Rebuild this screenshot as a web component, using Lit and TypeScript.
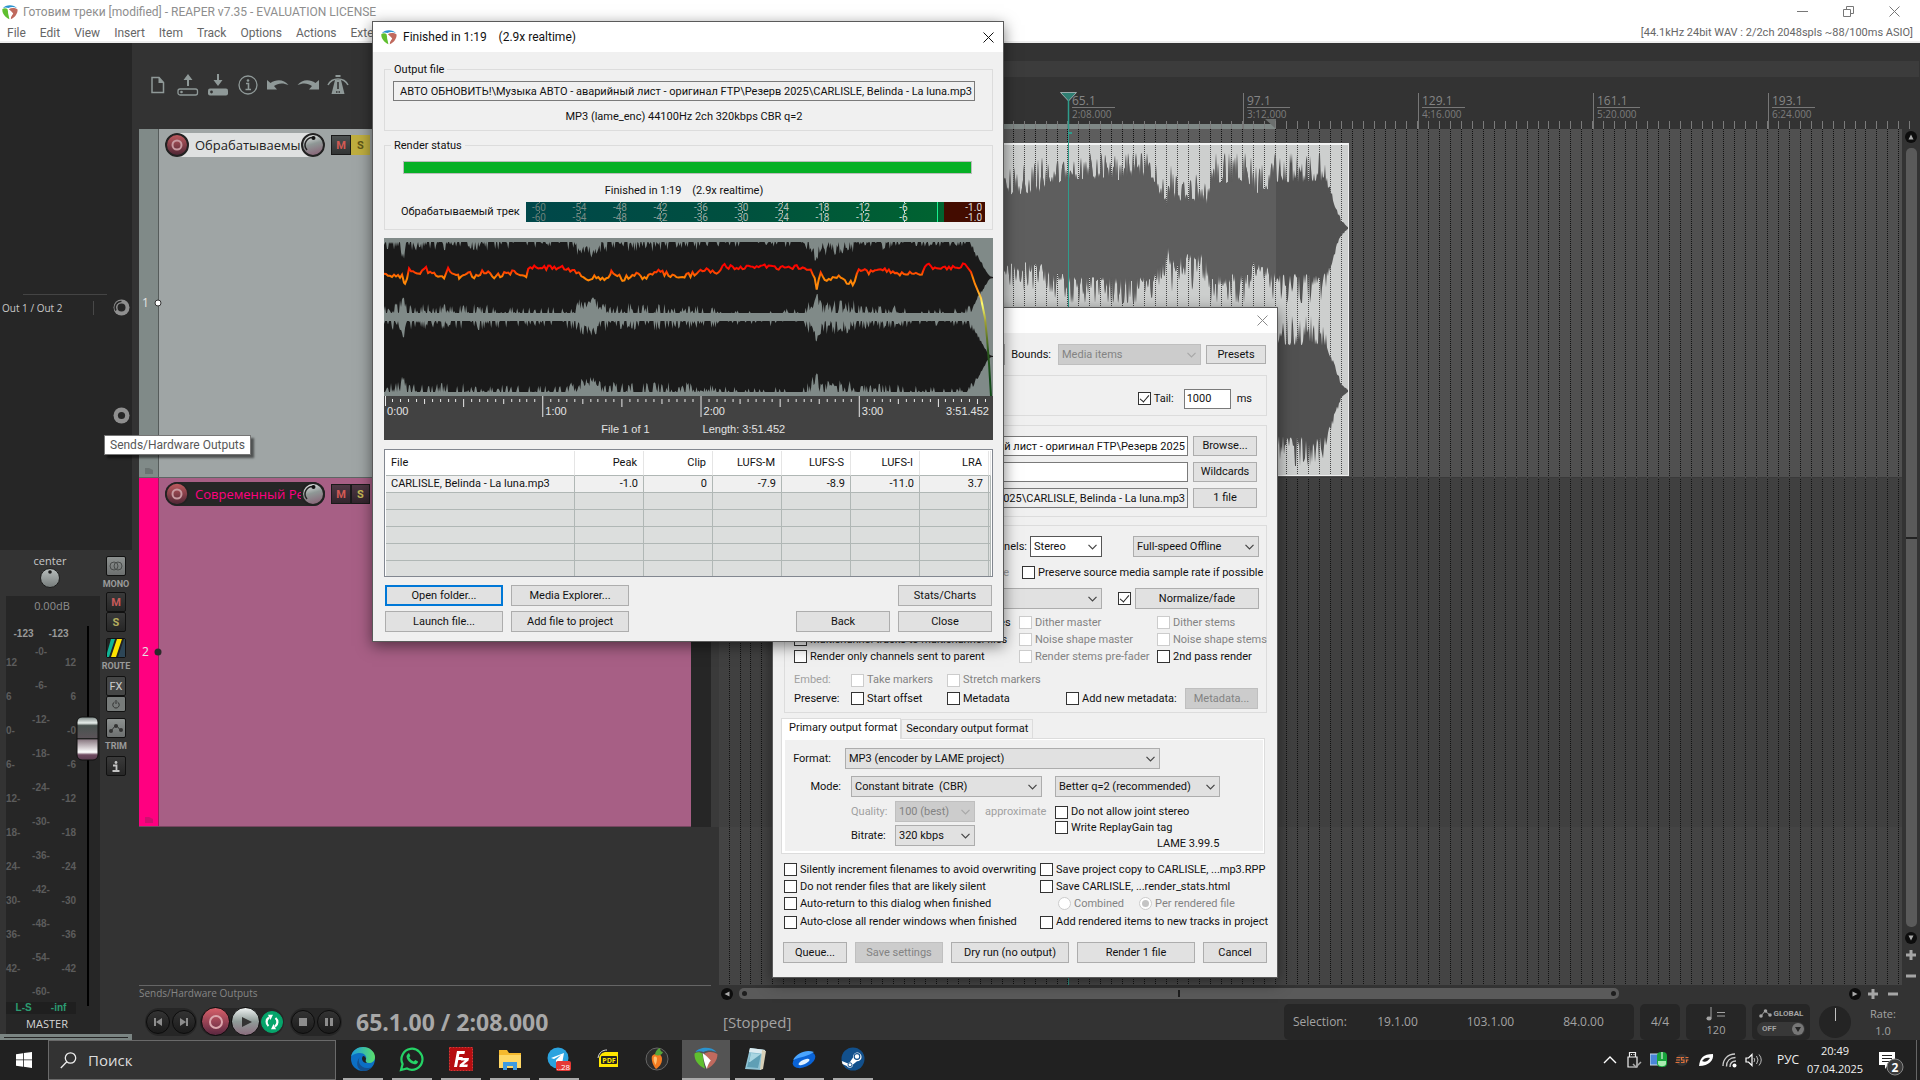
import { LitElement, html, svg, css } from "lit";
import { customElement } from "lit/decorators.js";

/* ---------- deterministic waveform helpers ---------- */
type Pt = [number, number, number]; // x, body level, peak level

function rng(seed: number) {
  let s = seed;
  return () => {
    s = (s * 1664525 + 1013904223) % 4294967296;
    return s / 4294967296;
  };
}

function levels(pts: Pt[], x: number): [number, number] {
  for (let i = 1; i < pts.length; i++) {
    if (x <= pts[i][0]) {
      const a = pts[i - 1];
      const b = pts[i];
      const t = (x - a[0]) / (b[0] - a[0] || 1);
      return [a[1] + (b[1] - a[1]) * t, a[2] + (b[2] - a[2]) * t];
    }
  }
  const l = pts[pts.length - 1];
  return [l[1], l[2]];
}

function wave(pts: Pt[], cy: number, half: number, seed: number, bias = 2): string {
  const r = rng(seed);
  const x0 = pts[0][0];
  const x1 = pts[pts.length - 1][0];
  const top: string[] = [];
  const bot: string[] = [];
  for (let x = x0; x <= x1; x++) {
    const [b, p] = levels(pts, x);
    const u = Math.min(1, b + (p - b) * Math.pow(r(), bias)) * half;
    const d = Math.min(1, b + (p - b) * Math.pow(r(), bias)) * half;
    top.push(`${x},${(cy - u).toFixed(1)}`);
    bot.unshift(`${x},${(cy + d).toFixed(1)}`);
  }
  return "M" + top.concat(bot).join("L") + "Z";
}

const ARRANGE: Pt[] = [
  [719, 0.55, 1], [990, 0.6, 0.95], [1003, 0.6, 0.8], [1010, 0.44, 0.8], [1040, 0.46, 0.95], [1050, 0.58, 1.05],
  [1068, 0.62, 1.05], [1072, 0.64, 1.08], [1146, 0.64, 1.08], [1156, 0.56, 0.85], [1162, 0.38, 0.75],
  [1168, 0.24, 0.65], [1170, 0.42, 0.9], [1180, 0.34, 0.75], [1192, 0.34, 0.85], [1203, 0.32, 0.7],
  [1207, 0.3, 0.75], [1211, 0.6, 1.05], [1248, 0.6, 1.05], [1254, 0.44, 0.85], [1270, 0.52, 0.95],
  [1276, 0.6, 1.02], [1318, 0.62, 1.08], [1325, 0.6, 0.85], [1330, 0.46, 0.6], [1336, 0.24, 0.32],
  [1341, 0.08, 0.12], [1348, 0.01, 0.02],
];

const RENDER: Pt[] = [
  [0, 0.76, 1.4], [14, 0.7, 1.2], [20, 0.5, 0.6], [23, 0.75, 1.35], [50, 0.72, 1.3], [60, 0.74, 1.2],
  [100, 0.74, 1.35], [140, 0.82, 1.5], [180, 0.82, 1.5], [195, 0.6, 0.95], [200, 0.58, 0.9],
  [212, 0.55, 0.85], [216, 0.7, 1.25], [300, 0.72, 1.3], [340, 0.84, 1.6], [415, 0.85, 1.6],
  [426, 0.62, 1.05], [432, 0.4, 0.7], [436, 0.62, 1.1], [468, 0.6, 1.05], [474, 0.75, 1.35],
  [500, 0.76, 1.4], [540, 0.84, 1.6], [582, 0.85, 1.2], [590, 0.62, 0.8], [597, 0.34, 0.42],
  [602, 0.12, 0.16], [605, 0.03, 0.04], [608, 0.01, 0.02],
];

function loudness(): string {
  const p = [
    [0, 37], [18, 39], [21, 46], [25, 32], [34, 36], [40, 29], [46, 36], [60, 38], [64, 32], [75, 39], [84, 34],
    [90, 40], [98, 33], [110, 38], [120, 36], [130, 33], [142, 39], [144, 29], [160, 30], [180, 29], [188, 32],
    [195, 35], [200, 42], [212, 38], [222, 42], [227, 34], [238, 41], [250, 36], [262, 41], [270, 32], [282, 36],
    [298, 39], [312, 35], [318, 32], [334, 35], [338, 28], [350, 30], [372, 28], [390, 30], [420, 28],
    [428, 34], [432, 50], [436, 36], [440, 42], [452, 38], [460, 43], [468, 46], [472, 36], [474, 31],
    [484, 34], [500, 32], [515, 36], [538, 34], [542, 28], [560, 30], [576, 29], [580, 26],
  ];
  const r = rng(77);
  const out: string[] = [];
  for (let i = 1; i < p.length; i++) {
    const [ax, ay] = p[i - 1];
    const [bx, by] = p[i];
    for (let x = ax; x < bx; x += 2) {
      out.push(`${x},${(ay + ((by - ay) * (x - ax)) / (bx - ax) + (r() - 0.5) * 5).toFixed(1)}`);
    }
  }
  return "M" + out.join("L") + "L580,26L586,34L590,46L596,60L600,80L602,100L604,125L606,158";
}

const BAR1 = 718.2;
const BAR = 5.4656;
const barX = (b: number) => BAR1 + (b - 1) * BAR;

/* ---------- small shared drawings ---------- */
const reaperLogo = (s: number) => html`<svg width=${s} height=${s} viewBox="0 0 16 16" aria-hidden="true">
  <path d="M1 4C3 .6 12-.2 15 4.2c-3-1.600-6-1.600-8.600-.2C4.400 3.200 2.600 3.400 1 4z" fill="#2b93cf"/>
  <path d="M.4 5c1.700-1.200 3.800-1 5.200.2.600 3.600 1 6.800 1.800 10C3 13.200-.2 9.200.4 5z" fill="#5fbf2f"/>
  <path d="M6.800 5.200c2.400-1.600 6-1.600 8.800.2.200 4-2.600 7.800-6.800 9.800-.4-2 .8-3.800 2-5.400z" fill="#c06a5e"/>
  <path d="M5.800 4.600c2 1.500 3.700 3 5.400 5-1.200 1.600-2.400 3.400-2.600 5.800C7 12 6.200 8.400 5.800 4.600z" fill="#fff"/>
</svg>`;

const closeX = (c: string) => html`<svg width="11" height="11" viewBox="0 0 11 11" aria-hidden="true"><path d="M.5.5l10 10M10.500.5l-10 10" stroke=${c} fill="none"/></svg>`;

const check = (label: string, o: { on?: boolean; off?: boolean } = {}) => html`<label class="chk ${o.off ? "off" : ""}"><input type="checkbox" ?checked=${!!o.on} ?disabled=${!!o.off} />${label}</label>`;

const pick = (name: string, value: string, cls: string, off = false) => html`<span class="pick ${cls} ${off ? "off" : ""}">
  <select aria-label=${name} ?disabled=${off}><option>${value}</option></select>
  <svg width="9" height="6" viewBox="0 0 9 6" aria-hidden="true"><path d="M.5.8l4 4 4-4" fill="none" stroke="currentColor" stroke-width="1.200"/></svg>
</span>`;

const knobRing = (arc: boolean) => html`<svg width="17" height="17" viewBox="0 0 17 17" aria-hidden="true">
  <circle cx="8.500" cy="8.500" r="8" fill="#8f8f8f"/><circle cx="8.500" cy="8.500" r="3.600" fill="#262626"/>
  ${arc ? svg`<path d="M3 11.500A6 6 0 0 1 8.500 2.500" fill="none" stroke="#262626" stroke-width="1.500"/><circle cx="8.500" cy="8.500" r="5" fill="#8f8f8f"/><circle cx="8.500" cy="8.500" r="4" fill="#262626"/>` : ""}
</svg>`;

const sharedStyles = css`
  * { box-sizing: border-box; }
  svg { display: block; flex: none; }
  button, input, select { font: inherit; color: inherit; margin: 0; }
`;

/* ---------- dialogs ---------- */
const dialogStyles = css`
  :host {
    display: block; background: #f0f0f0; border: 1px solid #5a5a5a; color: #111;
    font: 11px/14px Roboto, "Liberation Sans", Arial, sans-serif; box-shadow: 0 4px 14px rgba(0, 0, 0, 0.5);
  }
  .bar { display: flex; align-items: center; background: #fff; font-size: 12px; gap: 6px; }
  .bar h2 { font: inherit; margin: 0; flex: 1; white-space: pre; }
  .x { border: 0; background: none; padding: 0 9px; height: 100%; }
  .btn { background: #e1e1e1; border: 1px solid #adadad; padding: 0; height: 21px; text-align: center; white-space: nowrap; }
  .btn.focus { border: 2px solid #0078d7; }
  .btn:disabled { background: #ccc; border-color: #bfbfbf; color: #838383; }
  .field { height: 20px; border: 1px solid #7a7a7a; background: #fff; padding: 0 2px; min-width: 0; }
  .field.ro { background: #f0f0f0; }
  .right { text-align: right; }
  .chk { display: flex; align-items: center; gap: 3px; white-space: nowrap; }
  .chk input { appearance: none; width: 13px; height: 13px; border: 1px solid #333; background: #fff; display: grid; place-items: center; flex: none; }
  .chk input:checked::after { content: ""; width: 4px; height: 8px; border: solid #222; border-width: 0 1px 1px 0; transform: rotate(40deg); margin-top: -2px; }
  .chk input[type="radio"] { border-radius: 50%; }
  .chk input[type="radio"]:checked::after { width: 7px; height: 7px; margin: 0; border: 0; border-radius: 50%; background: #c4c4c4; transform: none; }
  .off, .dim { color: #838383; }
  .dim { color: #a0a0a0; }
  .chk.off input { border-color: #ccc; }
  .pick { display: grid; grid-template-columns: 1fr 20px; align-items: center; height: 21px; }
  .pick select { grid-area: 1 / 1 / 2 / 3; appearance: none; width: 100%; height: 21px; border: 1px solid #adadad; border-radius: 0; background: #e1e1e1; padding: 0 3px; opacity: 1; white-space: pre; }
  .pick svg { grid-area: 1 / 2; justify-self: center; color: #444; pointer-events: none; }
  .pick.off select { background: #ccc; border-color: #bfbfbf; color: #838383; }
  .pick.off svg { color: #a8a8a8; }
  .pick.white select { background: #fff; border-color: #555; }
`;

@customElement("finished-dialog")
export class FinishedDialog extends LitElement {
  static styles = [sharedStyles, dialogStyles, css`
    .bar { height: 30px; padding-left: 8px; }
    .body { padding: 11px 10px 9px 11px; display: grid; gap: 8px; }
    fieldset { margin: 0; padding: 0; border: 1px solid #dcdcdc; min-width: 0; }
    legend { margin-left: 6px; padding: 0 3px; height: 13px; line-height: 14px; }
    .out { display: grid; justify-items: center; padding: 5px 17px 6px 8px; gap: 9px; }
    .out .field { width: 100%; }
    .status { padding: 9px 7px 7px 16px; display: grid; }
    .prog { height: 13px; border: 1px solid #bcbcbc; background: #06b025; margin: 0 13px 0 2px; }
    .msg { text-align: center; margin: 10px 0 4px; padding-right: 18px; white-space: pre; }
    .meter { display: flex; align-items: center; justify-content: space-between; }
    .meter svg { width: 459px; }
    .graph svg { width: 100%; }
    .grid { border: 1px solid #828790; background: #fff; padding: 1px; height: 128px; overflow: hidden; margin-top: 1px; }
    table { border-collapse: separate; border-spacing: 0; table-layout: fixed; width: 100%; }
    th, td { padding: 0 5px; font-weight: normal; text-align: right; border: solid #b0b7b5; border-width: 0 1px 1px 0; height: 17px; line-height: 16px; white-space: nowrap; }
    th { height: 25px; background: #fff; border-right-color: #e5e5e5; padding-right: 6px; }
    th:first-child, td:first-child { text-align: left; }
    td { background: #dcdedd; }
    .data td { background: #f0f0f0; }
    .c0 { width: 189px; } .c1 { width: 69px; }
    .acts { display: grid; grid-template-columns: 118px 118px 1fr 94px 94px; gap: 5px 8px; padding: 0 1px; }
    .last { grid-column: 5; } .back { grid-column: 4; }
  `];

  private meter() {
    const marks = [-60, -54, -48, -42, -36, -30, -24, -18, -12, -6];
    return html`<svg height="20" viewBox="0 0 459 20" preserveAspectRatio="none" role="img" aria-label="Output meter">
      <defs><linearGradient id="mg"><stop offset="0" stop-color="#00474a"/><stop offset=".5" stop-color="#00503f"/><stop offset="1" stop-color="#006430"/></linearGradient></defs>
      <rect width="418" height="20" fill="url(#mg)"/><rect x="418" width="41" height="20" fill="#430c00"/>
      <rect x="411" width="1" height="20" fill="#19ef8e"/>
      ${marks.map((m, i) => {
        const x = 13 + i * 40.5;
        const f = `rgb(${105 + i * 13},${128 + i * 11},${122 + i * 11})`;
        return svg`<path d="M${Math.round(x) + 0.5} 0v1M${Math.round(x) + 0.5} 9v2M${Math.round(x) + 0.5} 19v1" stroke=${f}/><g fill=${f} font-size="10" text-anchor="middle"><text x=${x} y="9">${m}</text><text x=${x} y="19">${m}</text></g>`;
      })}
      <g fill="#ddd" font-size="10" text-anchor="end"><text x="456" y="9">-1.0</text><text x="456" y="19">-1.0</text></g>
    </svg>`;
  }

  private ticks() {
    const out = [];
    for (let s = 0; s <= 231; s += 3) {
      const x = Math.floor(1 + s * 2.629) + 0.5;
      const h = s % 60 === 0 ? (s ? 21 : 10) : s % 30 === 0 ? 11 : s % 15 === 0 ? 8 : 6;
      out.push(svg`<path d="M${x} ${s % 60 === 0 ? 0 : 3}V${h}" stroke="#e8e8e8"/>`);
    }
    return out;
  }

  render() {
    return html`
      <div class="bar">${reaperLogo(16)}<h2>Finished in 1:19    (2.9x realtime)</h2><button class="x" aria-label="Close window">${closeX("#111")}</button></div>
      <div class="body">
        <fieldset><legend>Output file</legend>
          <div class="out"><input class="field ro right" aria-label="Output file" readonly value="АВТО ОБНОВИТЬ!\\Музыка АВТО - аварийный лист - оригинал FTP\\Резерв 2025\\CARLISLE, Belinda - La luna.mp3" />
          <span>MP3 (lame_enc) 44100Hz 2ch 320kbps CBR q=2</span></div>
        </fieldset>
        <fieldset><legend>Render status</legend>
          <div class="status"><div class="prog" role="progressbar" aria-valuenow="100"></div>
            <div class="msg">Finished in 1:19    (2.9x realtime)</div>
            <div class="meter"><span>Обрабатываемый трек</span>${this.meter()}</div></div>
        </fieldset>
        <div class="graph">
          <svg height="158" viewBox="0 0 608 158" preserveAspectRatio="none" role="img" aria-label="Rendered waveform">
            <defs><linearGradient id="lg" gradientUnits="userSpaceOnUse" x1="0" y1="28" x2="0" y2="140">
              <stop offset="0" stop-color="#f00"/><stop offset=".03" stop-color="#ff1a00"/><stop offset=".1" stop-color="#ff8200"/><stop offset=".2" stop-color="#ff8c10"/><stop offset=".34" stop-color="#ffff70"/><stop offset=".5" stop-color="#a0a030"/><stop offset=".75" stop-color="#2c5a1c"/><stop offset="1" stop-color="#124a18"/></linearGradient></defs>
            <rect width="608" height="158" fill="#808a88"/>
            <path d=${wave(RENDER, 39.5, 35.5, 11, 1)} fill="#1a1a1a"/><path d=${wave(RENDER, 118.5, 35.5, 29, 1)} fill="#1a1a1a"/>
            <path d=${loudness()} fill="none" stroke="url(#lg)" stroke-width="2"/>
          </svg>
          <svg height="44" viewBox="0 0 608 44" preserveAspectRatio="none"><rect width="608" height="44" fill="#424242"/>${this.ticks()}
            <g fill="#e2e2e2" font-size="11" font-family="Liberation Sans"><text x="3" y="19">0:00</text><text x="161" y="19">1:00</text><text x="319" y="19">2:00</text><text x="477" y="19">3:00</text><text x="604" y="19" text-anchor="end">3:51.452</text>
            <text x="217" y="37">File 1 of 1</text><text x="318" y="37">Length: 3:51.452</text></g></svg>
        </div>
        <div class="grid"><table>
          <colgroup><col class="c0" />${[1, 2, 3, 4, 5, 6].map(() => html`<col class="c1" />`)}<col /></colgroup>
          <thead><tr>${["File", "Peak", "Clip", "LUFS-M", "LUFS-S", "LUFS-I", "LRA", ""].map((t) => html`<th>${t}</th>`)}</tr></thead>
          <tbody><tr class="data">${["CARLISLE, Belinda - La luna.mp3", "-1.0", "0", "-7.9", "-8.9", "-11.0", "3.7", ""].map((t) => html`<td>${t}</td>`)}</tr>
          ${[1, 2, 3, 4, 5].map(() => html`<tr>${[1, 2, 3, 4, 5, 6, 7, 8].map(() => html`<td></td>`)}</tr>`)}</tbody>
        </table></div>
        <div class="acts">
          <button class="btn focus">Open folder...</button><button class="btn">Media Explorer...</button><button class="btn last">Stats/Charts</button>
          <button class="btn">Launch file...</button><button class="btn">Add file to project</button><button class="btn back">Back</button><button class="btn last">Close</button>
        </div>
      </div>`;
  }
}

@customElement("render-dialog")
export class RenderDialog extends LitElement {
  static styles = [sharedStyles, dialogStyles, css`
    .bar { height: 25px; justify-content: flex-end; }
    .body { padding: 11px 10px 14px 11px; }
    .row { display: flex; align-items: center; }
    .end { justify-content: flex-end; }
    .box { border: 1px solid #dcdcdc; }
    .top { gap: 5px; padding-right: 1px; }
    .top .btn { width: 60px; height: 19px; }
    .b143 { width: 143px; } .b72 { width: 72px; } .b126 { width: 126px; } .b315 { width: 315px; } .b191 { width: 191px; } .b165 { width: 165px; } .b80 { width: 80px; }
    .src { width: 200px; }
    .bounds { margin: 0 2px 0 1px; }
    .tail { height: 41px; margin-top: 10px; padding: 6px 14px 0 0; }
    .tail .field { width: 47px; margin: 0 6px 0 10px; }
    .files { margin-top: 9px; padding: 10px 9px 8px; display: grid; grid-template-columns: 1fr 64px; gap: 6px 5px; }
    .files .btn { height: 20px; }
    .opts { margin-top: 8px; padding: 10px 7px 3px 9px; }
    .opts .r1 { gap: 3px; } .opts .b126 { margin-left: 28px; }
    .r2 { display: grid; grid-template-columns: 215px 1fr; column-gap: 13px; height: 31px; }
    .r3 .chk { margin: 0 4px 0 16px; } .r3 .btn { width: 124px; } .r3 .b { width: 260px; }
    .marks { display: grid; grid-template-columns: 225px 138px 1fr; grid-auto-rows: 17px; margin-top: 5px; }
    .embed { display: grid; grid-template-columns: 57px 96px 119px 119px 73px; align-items: center; margin-top: 8px; row-gap: 1px; }
    .tabs { display: flex; align-items: flex-end; margin: 5px 2px 0 -3px; }
    .tab { border: 1px solid #dcdcdc; border-bottom: 0; background: #f0f0f0; height: 19px; padding: 0 4px; white-space: nowrap; }
    .tab.on { background: #fff; height: 21px; padding: 0 3px 2px 7px; margin-bottom: -1px; z-index: 1; }
    .panel { border: 1px solid #dcdcdc; background: #fff; padding: 1px 1px 2px 3px; margin: 0 2px 0 -3px; }
    .inner { background: #f0f0f0; padding: 8px 0 0; height: 111px; }
    .lab { text-align: right; }
    .f1 { display: grid; grid-template-columns: 46px 1fr; column-gap: 14px; }
    .f2 { display: grid; grid-template-columns: 56px 191px 165px; column-gap: 10px; margin-top: 7px; }
    .f2 .b165 { margin-left: 3px; width: 165px; }
    .f3 { display: grid; grid-template-columns: 34px 80px 70px 1fr; grid-template-rows: 21px 21px; gap: 3px 10px; align-items: center; margin: 4px 0 0 66px; }
    .f3 > .col { grid-area: 1 / 4 / 3 / 5; align-self: start; display: grid; grid-template-rows: 16px 15px 18px; height: 45px; align-items: center; margin: 3px 0 0 -10px; }
    .lame { padding-left: 102px; }
    .more { display: grid; grid-template-columns: 256px 1fr; grid-template-rows: 17px 17px 17px 20px; align-items: center; margin-top: 7px; }
    .rad { display: flex; gap: 15px; padding-left: 18px; }
    .foot { display: grid; grid-template-columns: 64px 88px 118px 118px 64px; justify-content: space-between; margin: 10px 0 0 -1px; }
  `];
  render() {
    return html`
      <div class="bar"><button class="x" aria-label="Close window">${closeX("#8a8a8a")}</button></div>
      <div class="body">
        <div class="row end top">${pick("Source", "", "src")}<span class="bounds">Bounds:</span>${pick("Bounds", "Media items", "b143", true)}<button class="btn">Presets</button></div>
        <div class="row end box tail">${check("Tail:", { on: true })}<input class="field" aria-label="Tail length" value="1000" />ms</div>
        <div class="box files">
          <input class="field right" aria-label="Directory" value="аварийный лист - оригинал FTP\\Резерв 2025" /><button class="btn">Browse...</button>
          <input class="field" aria-label="File name" /><button class="btn">Wildcards</button>
          <input class="field ro right" aria-label="Render to" readonly value="2025\\CARLISLE, Belinda - La luna.mp3" /><button class="btn">1 file</button>
        </div>
        <div class="box opts">
          <div class="row end r1"><span>Channels:</span>${pick("Channels", "Stereo", "b72 white")}${pick("Render speed", "Full-speed Offline", "b126")}</div>
          <div class="row r2"><span class="dim lab">sample rate</span>${check("Preserve source media sample rate if possible")}</div>
          <div class="row end r3">${pick("Resample mode", "", "b")}${check("", { on: true })}<button class="btn">Normalize/fade</button></div>
          <div class="marks">
            ${check("Tracks with all mono media to mono files")}${check("Dither master", { off: true })}${check("Dither stems", { off: true })}
            ${check("Multichannel tracks to multichannel files")}${check("Noise shape master", { off: true })}${check("Noise shape stems", { off: true })}
            ${check("Render only channels sent to parent")}${check("Render stems pre-fader", { off: true })}${check("2nd pass render")}
          </div>
          <div class="embed"><span class="dim">Embed:</span>${check("Take markers", { off: true })}${check("Stretch markers", { off: true })}<i></i><i></i>
            <span>Preserve:</span>${check("Start offset")}${check("Metadata")}${check("Add new metadata:")}<button class="btn" disabled>Metadata...</button></div>
        </div>
        <div class="tabs" role="tablist"><button class="tab on" role="tab">Primary output format</button><button class="tab" role="tab">Secondary output format</button></div>
        <div class="panel"><div class="inner">
          <div class="row f1"><span class="lab">Format:</span>${pick("Format", "MP3 (encoder by LAME project)", "b315")}</div>
          <div class="row f2"><span class="lab">Mode:</span>${pick("Mode", "Constant bitrate \u00a0(CBR)", "b191")}${pick("Encoder quality", "Better q=2 (recommended)", "b165")}</div>
          <div class="f3"><span class="dim">Quality:</span>${pick("Quality", "100 (best)", "b80", true)}<span class="dim">approximate</span>
            <div class="col">${check("Do not allow joint stereo")}${check("Write ReplayGain tag")}<span class="lame">LAME 3.99.5</span></div>
            <span>Bitrate:</span>${pick("Bitrate", "320 kbps", "b80")}</div>
        </div></div>
        <div class="more">
          ${check("Silently increment filenames to avoid overwriting")}${check("Save project copy to CARLISLE, ...mp3.RPP")}
          ${check("Do not render files that are likely silent")}${check("Save CARLISLE, ...render_stats.html")}
          ${check("Auto-return to this dialog when finished")}
          <div class="rad"><label class="chk off"><input type="radio" name="st" disabled />Combined</label><label class="chk off"><input type="radio" name="st" disabled checked />Per rendered file</label></div>
          ${check("Auto-close all render windows when finished")}${check("Add rendered items to new tracks in project")}
        </div>
        <div class="foot"><button class="btn">Queue...</button><button class="btn" disabled>Save settings</button><button class="btn">Dry run (no output)</button><button class="btn">Render 1 file</button><button class="btn">Cancel</button></div>
      </div>`;
  }
}

/* ---------- master strip ---------- */
@customElement("master-strip")
export class MasterStrip extends LitElement {
  static styles = [sharedStyles, css`
    :host { display: flex; flex-direction: column; width: 132px; flex: none; background: #333; color: #c8c8c8; font: 11px/14px "Open Sans", "Noto Sans", sans-serif; }
    .sends { background: #262626; height: 507px; padding-top: 251px; flex: none; }
    .rule { height: 1px; background: #444; margin: 0 25px 0 23px; }
    .out { display: flex; align-items: center; padding: 4px 2px 0; justify-content: space-between; }
    .out span { font-size: 10px; width: 92px; border-right: 1px solid #484848; white-space: nowrap; }
    .ring { display: flex; justify-content: flex-end; padding: 91px 2px 0 0; }
    .strip { display: flex; flex: 1; padding-left: 6px; min-height: 0; }
    .left { width: 94px; display: flex; flex-direction: column; align-items: center; }
    .pan { height: 46px; display: flex; flex-direction: column; align-items: center; padding: 4px 6px 0 0; }
    .fader { background: #262626; width: 94px; flex: 1; display: flex; flex-direction: column; min-height: 0; }
    .db { text-align: center; color: #8f8f8f; padding: 3px 2px 0 0; height: 30px; }
    .body { display: flex; flex: 1; min-height: 0; }
    .meters { width: 70px; font: bold 10px/34px "Liberation Sans", sans-serif; color: #5c5c5c; }
    .pk { display: flex; justify-content: space-around; color: #999; line-height: 16px; height: 9px; }
    .scale { display: flex; justify-content: space-between; height: 367px; }
    .scale div { display: flex; flex-direction: column; }
    .side { padding-top: 11px; } .r { text-align: right; } .c { text-align: center; }
    .slot { width: 24px; display: flex; justify-content: center; }
    .ls { display: flex; justify-content: space-around; width: 70px; background: #1f1f1f; color: #2c9c72; font: bold 10px/12px "Liberation Sans", sans-serif; height: 12px; }
    .name { width: 84px; text-align: center; height: 20px; line-height: 20px; padding-right: 2px; color: #d5d5d5; }
    .btns { width: 32px; display: flex; flex-direction: column; align-items: center; padding: 6px 0 0; }
    .btns button { width: 20px; height: 20px; padding: 0; display: grid; place-items: center; border: 1px solid #111; border-radius: 2px; background: linear-gradient(#3a3a3a, #262626); font: bold 11px/1 Roboto, sans-serif; flex: none; }
    .btns .lt { background: linear-gradient(#8d9190, #6d7070); }
    .btns .m { color: #c75a5a; } .btns .s { color: #b5ad5e; }
    .btns .fx { font-weight: normal; color: #ccc; background: #454646; } .btns .pw { height: 16px; background: #777b7a; margin-bottom: 6px; }
    .btns small { font: bold 9px/16px Roboto, sans-serif; color: #9a9a9a; height: 16px; }
    .btns .s { margin-bottom: 6px; } .btns .rt + small { height: 18px; } .btns .tr + small { height: 18px; }
    .foot { height: 6px; background: #7b8583; padding: 3px 4px 0; } .foot div { height: 1px; background: #262626; }
  `];
  render() {
    const mid = [0, 6, 12, 18, 24, 30, 36, 42, 48, 54, 60];
    const side = ["12", "6", "0-", "6-", "12-", "18-", "24-", "30-", "36-", "42-"];
    const sideR = ["12", "6", "-0", "-6", "-12", "-18", "-24", "-30", "-36", "-42"];
    return html`
      <div class="sends"><div class="rule"></div><div class="out"><span>Out 1 / Out 2</span>${knobRing(true)}</div><div class="ring">${knobRing(false)}</div></div>
      <div class="strip">
        <div class="left">
          <div class="pan"><span>center</span><svg width="20" height="20" viewBox="0 0 20 20"><defs><linearGradient id="kg" x2="0" y2="1"><stop stop-color="#b9bfbe"/><stop offset="1" stop-color="#757b7a"/></linearGradient></defs><circle cx="10" cy="10" r="9.500" fill="url(#kg)" stroke="#1c1c1c"/><circle cx="10" cy="4" r="1.800" fill="#1c1c1c"/></svg></div>
          <div class="fader"><div class="db">0.00dB</div>
            <div class="body"><div class="meters"><div class="pk"><span>-123</span><span>-123</span></div>
              <div class="scale"><div class="side">${side.map((s) => html`<span>${s}</span>`)}</div><div class="c">${mid.map((m) => html`<span>-${m}-</span>`)}</div><div class="side r">${sideR.map((s) => html`<span>${s}</span>`)}</div></div>
              <div class="ls"><span>L-S</span><span>-inf</span></div></div>
              <div class="slot"><svg width="24" height="380" viewBox="0 0 24 380"><defs><linearGradient id="fk" x2="0" y2="1"><stop stop-color="#7c8785"/><stop offset=".14" stop-color="#e8efec"/><stop offset=".2" stop-color="#48524f"/><stop offset=".48" stop-color="#5a5358"/><stop offset=".5" stop-color="#222"/><stop offset=".54" stop-color="#8f7f88"/><stop offset=".82" stop-color="#fff"/><stop offset=".88" stop-color="#6e4a60"/><stop offset="1" stop-color="#5a3d50"/></linearGradient></defs>
                <rect x="11" y="0" width="2" height="380"/><rect x="1" y="91" width="21" height="43" rx="5" fill="url(#fk)" stroke="#111"/></svg></div></div>
            <div class="name">MASTER</div></div>
        </div>
        <div class="btns">
          <button class="lt" aria-label="Mono"><svg width="14" height="10" viewBox="0 0 14 10"><g fill="none" stroke="#484b4a"><circle cx="5" cy="5" r="4"/><circle cx="9" cy="5" r="4"/></g></svg></button><small>MONO</small>
          <button class="m">M</button><button class="s">S</button>
          <button class="rt" aria-label="Route"><svg width="18" height="18" viewBox="0 0 18 18"><rect width="18" height="18" fill="#222"/><path d="M0 14L4 0h4L2 18H0z" fill="#10b597"/><path d="M4 18L10 0h5L9 18z" fill="#ffe200"/><path d="M11 18l6-18h1v18z" fill="#2d4657"/></svg></button><small>ROUTE</small>
          <button class="fx">FX</button><button class="pw" aria-label="Bypass"><svg width="8" height="9" viewBox="0 0 8 9"><path d="M2.500 2a3.200 3.200 0 1 0 3 0M4 0v4" fill="none" stroke="#333"/></svg></button>
          <button class="lt tr" aria-label="Trim"><svg width="14" height="9" viewBox="0 0 14 9"><path d="M2 7l4-5 2 0 4 5" fill="none" stroke="#333"/><circle cx="2" cy="7" r="2" fill="#333"/><circle cx="7" cy="2" r="2" fill="#333"/><circle cx="12" cy="6" r="2" fill="#333"/></svg></button><small>TRIM</small>
          <button aria-label="Info"><svg width="8" height="11" viewBox="0 0 8 11"><path d="M1 4.500h3.500V10M.5 10h7" fill="none" stroke="#c4c4c4" stroke-width="1.800"/><circle cx="4" cy="1.500" r="1.400" fill="#c4c4c4"/></svg></button>
        </div>
      </div>
      <div class="foot"><div></div></div>`;
  }
}

/* ---------- track panel ---------- */
@customElement("track-panel")
export class TrackPanel extends LitElement {
  static styles = [sharedStyles, css`
    :host { display: flex; flex-direction: column; width: 587px; flex: none; background: #333; padding-left: 7px; font: 14px/20px "Open Sans", "Noto Sans", sans-serif; min-height: 0; }
    .tools { height: 86px; flex: none; display: flex; gap: 2px; padding: 28px 0 0 5px; }
    .tools button { border: 0; background: none; padding: 0; width: 28px; height: 28px; display: grid; place-items: center; }
    .track { display: flex; height: 349px; width: 552px; flex: none; border-bottom: 1px solid #5e6664; }
    .tracks { background: linear-gradient(90deg, #333 552px, #262626 552px, #262626 572px, #3a3a3a 572px); }
    .idx { width: 20px; display: grid; grid-template-rows: 1fr 20px 1fr; justify-items: end; border-right: 1px solid #565c5b; background: #808a88; color: #e4e4e4; font-size: 12px; }
    .idx div { grid-row: 2; display: grid; grid-template-columns: 12px 8px; align-items: center; margin-right: -4px; }
    .idx .fold { grid-row: 3; align-self: end; justify-self: center; margin-bottom: 3px; }
    .idx svg { z-index: 1; }
    .one { background: #9fa5a5; } .two { background: #a75f85; border-bottom-color: #76465f; }
    .two .idx { background: #ff0080; border-right-color: #a0195d; }
    .main { flex: 1; padding: 4px 0 0 6px; display: flex; align-items: flex-start; gap: 6px; }
    .pill { display: flex; align-items: center; width: 160px; height: 24px; border-radius: 12px; background: #dfe1e1; color: #222; }
    .pill span { width: 106px; margin-left: auto; overflow: hidden; white-space: nowrap; font-size: 13px; }
    .two .pill { background: #262626; color: #ff0080; }
    .ms { display: flex; padding-top: 2px; }
    .ms button { width: 20px; height: 20px; padding: 0; border: 1px solid #1a1a1a; font: bold 11px/1 Roboto, sans-serif; background: linear-gradient(#4c5050, #323434); color: #d25a54; }
    .ms .s { color: #c4b955; width: 19px; } .ms .s.lit { background: #bfae3f; border-color: #bfae3f; color: #5e5517; }
    .two .ms button { background: linear-gradient(#4e3844, #33252d); }
    .fill { flex: 1; }
    .note { border-top: 1px solid #666; height: 55px; width: 572px; flex: none; color: #868686; font-size: 10px; line-height: 15px; }
  `];
  private rec(d: boolean) {
    return html`<svg width="24" height="24" viewBox="0 0 24 24"><defs><linearGradient id="rg" x2="0" y2="1"><stop stop-color="#c25c60"/><stop offset="1" stop-color="#4a2433"/></linearGradient></defs><circle cx="12" cy="12" r="11" fill="url(#rg)" stroke="#222" stroke-width=${d ? 2 : 1.6}/><circle cx="12" cy="12" r="4.500" fill="none" stroke="#c79aa0" stroke-width="2"/></svg>`;
  }
  private vol() {
    return html`<svg width="24" height="24" viewBox="0 0 24 24"><defs><linearGradient id="vg" x2=".3" y2="1"><stop stop-color="#fff"/><stop offset=".55" stop-color="#8f9896"/><stop offset="1" stop-color="#8a6b7c"/></linearGradient></defs><circle cx="12" cy="12" r="11" fill="url(#vg)" stroke="#222" stroke-width="2"/><path d="M6 17A7.500 7.500 0 0 1 12 4.500" fill="none" stroke="#222" stroke-width="1.500"/><circle cx="12.500" cy="5" r="2" fill="#111"/></svg>`;
  }
  private fold(c: string) {
    return html`<svg class="fold" width="8" height="6" viewBox="0 0 8 6"><path d="M0 0h4l4 2v4H0z" fill=${c}/></svg>`;
  }
  render() {
    const c = "#8f9998";
    return html`
      <div class="tools">
        <button aria-label="New project"><svg width="14" height="18" viewBox="0 0 14 18"><path d="M1 1.500h7l4.500 5v10H1z" fill="none" stroke=${c} stroke-width="1.500"/><path d="M7.500 1v6H13z" fill=${c}/></svg></button>
        <button aria-label="Open project"><svg width="22" height="22" viewBox="0 0 22 22"><path d="M10 12V6H6.500L11 0l4.500 6H12v6z" fill=${c}/><rect x="1" y="15" width="19.500" height="6" rx="2" fill="none" stroke=${c} stroke-width="1.300"/><circle cx="4.500" cy="18" r="1.300" fill=${c}/></svg></button>
        <button aria-label="Save project"><svg width="22" height="22" viewBox="0 0 22 22"><path d="M10 0v6H6.500L11 12l4.500-6H12V0z" fill=${c}/><rect x="1" y="14.500" width="20" height="7" rx="2" fill=${c}/><circle cx="4.500" cy="18" r="1.400" fill="#333"/></svg></button>
        <button aria-label="Project settings"><svg width="20" height="20" viewBox="0 0 20 20"><circle cx="10" cy="10" r="9" fill="none" stroke=${c} stroke-width="1.300"/><path d="M8 8.500h2.500V14M7.500 14.500h5.500" fill="none" stroke=${c} stroke-width="1.600"/><circle cx="10" cy="5.500" r="1.300" fill=${c}/></svg></button>
        <button aria-label="Undo"><svg width="22" height="12" viewBox="0 0 22 12"><path d="M0 1l3.500 3C9 0 17 0 21.500 6 16 3.500 11 4 7 7l3 3.500L0 10.500z" fill=${c}/></svg></button>
        <button aria-label="Redo"><svg width="22" height="12" viewBox="0 0 22 12"><path d="M22 1l-3.500 3C13 0 5 0 .5 6 6 3.500 11 4 15 7l-3 3.500 10 0z" fill=${c}/></svg></button>
        <button aria-label="Metronome"><svg width="22" height="20" viewBox="0 0 22 20"><path d="M8 5h6l3.500 14h-13z" fill=${c}/><path d="M11 7v7M9 17h1.500m1 0H13" stroke="#333" stroke-width="1.600"/><path d="M1 10C3 6 7 4 11 4s8 2 10 6" fill="none" stroke=${c} stroke-width="1.500"/><rect x="8.500" y="0" width="5" height="2" fill=${c}/></svg></button>
      </div>
      <div class="tracks">
        <div class="track one"><div class="idx"><div>1<svg width="8" height="8"><circle cx="4" cy="4" r="3" fill="#fff" stroke="#333"/></svg></div>${this.fold("#6b7372")}</div>
          <div class="main"><div class="pill">${this.rec(true)}<span>Обрабатываемый</span>${this.vol()}</div><div class="ms"><button>M</button><button class="s lit">S</button></div></div></div>
        <div class="track two"><div class="idx"><div>2<svg width="8" height="8"><circle cx="4" cy="4" r="3.500" fill="#2b2b2b"/></svg></div>${this.fold("#cf0f70")}</div>
          <div class="main"><div class="pill">${this.rec(false)}<span>Современный Ретро</span>${this.vol()}</div><div class="ms"><button>M</button><button class="s">S</button></div></div></div>
      </div>
      <div class="fill"></div>
      <div class="note">Sends/Hardware Outputs</div>`;
  }
}

/* ---------- arrange view ---------- */
@customElement("arrange-view")
export class ArrangeView extends LitElement {
  static styles = [sharedStyles, css`
    :host { display: grid; grid-template-columns: minmax(0, 1fr) 18px; grid-template-rows: 86px minmax(0, 1fr) 55px; flex: 1; min-width: 0; background: #333; font: 12px/14px "Open Sans", "Noto Sans", sans-serif; }
    .ruler { grid-column: 1 / 3; overflow: hidden; }
    .ruler svg, .lanes svg { width: 100%; height: 100%; }
    .lanes { overflow: hidden; min-height: 0; }
    .vs { display: flex; flex-direction: column; align-items: center; gap: 5px; padding: 2px 0 3px; }
    .vs .thumb { width: 11px; border-radius: 5px; background: #5a5a5a; flex: 1; display: grid; align-items: center; }
    .vs .thumb i { height: 2px; background: #222; }
    .vs .out { margin-top: 4px; }
    .hs { display: flex; align-items: center; gap: 6px; height: 17px; padding: 0 21px 0 2px; grid-column: 1 / 3; }
    .hs .thumb { flex: 0 0 880px; height: 11px; border-radius: 5px; background: #5a5a5a; display: flex; align-items: center; justify-content: space-between; padding: 0 3px; }
    .hs .thumb i { width: 5px; height: 5px; border-radius: 50%; background: #1e1e1e; } .hs .thumb b { width: 2px; height: 7px; background: #1e1e1e; }
    .hs .out { margin-left: 2px; }
    .sp { flex: 1; }
    .r { padding: 0; border: 0; width: 12px; height: 12px; border-radius: 50%; background: #0d0d0d; display: grid; place-items: center; flex: none; }
    .p { padding: 0; border: 0; background: none; width: 12px; height: 12px; display: grid; place-items: center; flex: none; }
  `];
  private tri(rot: number) {
    return html`<svg width="6" height="6" viewBox="0 0 6 6"><path d="M3 .5L5.500 5.500h-5z" fill="#aaa" transform="rotate(${rot} 3 3)"/></svg>`;
  }
  private sign(plus: boolean) {
    return html`<svg width="10" height="10" viewBox="0 0 10 10"><path d=${plus ? "M0 5h10M5 0v10" : "M0 5h10"} stroke="#a6a6a6" stroke-width="3"/></svg>`;
  }
  render() {
    const lines: number[] = [];
    for (let b = 1; barX(b) < 1921; b += 2) lines.push(Math.floor(barX(b)) + 0.5);
    const marks: [number, string, string][] = [[65, "65.1", "2:08.000"], [97, "97.1", "3:12.000"], [129, "129.1", "4:16.000"], [161, "161.1", "5:20.000"], [193, "193.1", "6:24.000"]];
    const s0 = barX(19);
    const s1 = Math.round(barX(103));
    const w = [wave(ARRANGE, 228, 75, 5), wave(ARRANGE, 391, 75, 9)];
    return html`
      <div class="ruler"><svg><g transform="translate(-719 -43)">
        <rect x="719" y="61" width="1200" height="16" fill="#3c3c3c"/>
        <rect x=${s0} y="124" width=${s1 - s0} height="5" fill="#7f8886"/>
        <path d="M1265 119h11v10z" fill="#6b6f6e"/>
        ${lines.map((x) => svg`<path d="M${x} 121v8" stroke="#7a7a7a"/>`)}
        ${marks.map(([b, t, u]) => { const x = Math.round(barX(b)); return svg`<path d="M${x + 0.5} 93v36M${x + 4} 107.500h43" stroke="#777"/><text x=${x + 4} y="105" font-size="12" fill="#858585">${t}</text><text x=${x + 4} y="118" font-size="10" fill="#7d7d7d">${u}</text>`; })}
        <path d="M1060.500 92.500h16l-8 8.500z" fill="#2f7f73" stroke="#9aa"/><path d="M1068.500 100v29" stroke="#2f9c8c" stroke-width="1.500"/>
      </g></svg></div>
      <div class="lanes"><svg><g transform="translate(-719 -129)">
        <defs><clipPath id="inSel"><rect x=${s0} y="129" width=${s1 - s0} height="900"/></clipPath></defs>
        <rect x="719" y="129" width="2400" height="349" fill="#505050"/><rect x="719" y="478" width="2400" height="349" fill="#404040"/><rect x="719" y="827" width="2400" height="900" fill="#444"/>
        <rect x=${s0} y="129" width=${s1 - s0} height="348" fill="#5d5d5d"/><rect x=${s0} y="478" width=${s1 - s0} height="600" fill="#4b4b4b"/>
        ${lines.map((x) => svg`<path d="M${x} 129V1400" stroke="#111" stroke-dasharray="1 1"/>`)}
        <rect x="719" y="143" width="630" height="333" fill="#cdcfce"/><rect x="719" y="143" width="630" height="2" fill="#f2f3f3"/><rect x="1348" y="143" width="1" height="333" fill="#eee"/><rect x="719" y="475" width="630" height="1" fill="#eee"/>
        ${lines.filter((x) => x < 1349).map((x) => svg`<path d="M${x} 145V475" stroke="#444" stroke-dasharray="1 1"/>`)}
        ${w.map((d) => svg`<path d=${d} fill="#515151"/><path d=${d} fill="#5e5e5e" clip-path="url(#inSel)"/>`)}
        <path d="M719 477.500h1200" stroke="#3a3a3a"/>
        <path d="M1068.500 129V1400" stroke="#2f9c8c"/><rect x="1068" y="132" width="4" height="2" fill="#2f9c8c"/>
      </g></svg></div>
      <div class="vs"><button class="r" aria-label="Scroll up">${this.tri(0)}</button><div class="thumb"><i></i></div><button class="r" aria-label="Scroll down">${this.tri(180)}</button><button class="p" aria-label="Zoom in tracks">${this.sign(true)}</button><button class="p out" aria-label="Zoom out tracks">${this.sign(false)}</button></div>
      <div class="hs"><button class="r" aria-label="Scroll left">${this.tri(-90)}</button><div class="thumb"><i></i><b></b><i></i></div><span class="sp"></span><button class="r" aria-label="Scroll right">${this.tri(90)}</button><button class="p" aria-label="Zoom in">${this.sign(true)}</button><button class="p out" aria-label="Zoom out">${this.sign(false)}</button></div>`;
  }
}

/* ---------- transport ---------- */
@customElement("transport-bar")
export class TransportBar extends LitElement {
  static styles = [sharedStyles, css`
    :host { display: flex; align-items: center; height: 39px; color: #a3a3a3; font: 12px/16px "Open Sans", "Noto Sans", sans-serif; padding: 2px 5px 0 13px; }
    .seg { display: flex; align-items: center; background: #262626; border-radius: 14px; height: 28px; padding: 0 1px; gap: 2px; }
    .seg button, .big { border: 1px solid #0c0c0c; border-radius: 50%; width: 24px; height: 24px; padding: 0; display: grid; place-items: center; background: linear-gradient(#333, #1b1b1b); flex: none; }
    .mid { margin: 0 6px 0 3px; gap: 1px; } .mid .big { width: 29px; height: 29px; }
    .mid .rec { background: linear-gradient(#d8606a, #5a2740); } .mid .play { background: linear-gradient(#eef2f1, #8f9b98 50%, #8b6d7e); } .mid .rep { width: 22px; height: 22px; background: #06a56b; border-color: #06a56b; }
    .time { font-size: 23px; font-weight: bold; line-height: 30px; margin: 0 0 0 14px; width: 367px; white-space: nowrap; color: #a8a8a8; }
    .state { font-size: 15px; flex: 1; }
    .box { background: #262626; border-radius: 5px; height: 36px; margin: 0 0 0 6px; display: flex; align-items: center; }
    .sel { width: 350px; padding-left: 9px; display: grid; grid-template-columns: 58px 93px 93px 93px; text-align: center; } .sel span:first-child { text-align: left; }
    .sig { width: 40px; justify-content: center; }
    .tempo { width: 60px; flex-direction: column; justify-content: space-between; padding: 3px 0 2px; font-size: 11px; }
    .glob { width: 58px; flex-direction: column; justify-content: center; gap: 2px; font: bold 8px/12px Roboto, sans-serif; }
    .glob div { display: flex; gap: 2px; align-items: center; } .glob button { display: flex; justify-content: space-between; align-items: center; width: 48px; height: 14px; border: 0; border-radius: 7px; background: #383838; padding: 0 0 0 5px; }
    .knob { margin: 0 0 0 9px; } .rate { width: 64px; text-align: center; font-size: 11px; line-height: 17px; }
  `];
  render() {
    const ic = (d: string) => html`<svg width="10" height="10" viewBox="0 0 10 10"><path d=${d} fill="#8d8d8d"/></svg>`;
    return html`
      <div class="seg"><button aria-label="Go to start">${ic("M1 1h2v8H1zM9 1v8L3 5z")}</button><button aria-label="Go to end">${ic("M7 1h2v8H7zM1 1v8l6-4z")}</button></div>
      <div class="seg mid"><button class="big rec" aria-label="Record"><svg width="16" height="16"><circle cx="8" cy="8" r="6" fill="none" stroke="#dba7ad" stroke-width="2"/></svg></button><button class="big play" aria-label="Play"><svg width="12" height="12"><path d="M2 1v10l10-5z" fill="#333"/></svg></button><button class="rep" aria-label="Repeat"><svg width="16" height="16" viewBox="0 0 16 16"><path d="M4.500 12A5.300 5.300 0 0 1 5 3.500M11.500 4a5.300 5.300 0 0 1-.5 8.500" fill="none" stroke="#fff" stroke-width="2.200"/><path d="M4 .8h5L6.500 6zM12 15.200H7L9.500 10z" fill="#fff"/></svg></button></div>
      <div class="seg"><button aria-label="Stop">${ic("M1 1h8v8H1z")}</button><button aria-label="Pause">${ic("M1 1h3v8H1zM6 1h3v8H6z")}</button></div>
      <div class="time">65.1.00 / 2:08.000</div><div class="state">[Stopped]</div>
      <div class="box sel"><span>Selection:</span><span>19.1.00</span><span>103.1.00</span><span>84.0.00</span></div>
      <div class="box sig">4/4</div>
      <div class="box tempo"><svg width="20" height="14" viewBox="0 0 20 14"><ellipse cx="3" cy="11.500" rx="2.600" ry="1.900" fill="#a3a3a3"/><path d="M5 11V0M11 5.500h8M11 9h8" stroke="#a3a3a3"/></svg><span>120</span></div>
      <div class="box glob"><div><svg width="13" height="9" viewBox="0 0 13 9"><path d="M2 7l4-5 5 4" fill="none" stroke="#a3a3a3"/><circle cx="2" cy="7" r="1.800" fill="#a3a3a3"/><circle cx="6.500" cy="2" r="1.800" fill="#a3a3a3"/><circle cx="11" cy="6" r="1.800" fill="#a3a3a3"/></svg>GLOBAL</div><button>OFF<svg width="14" height="14" viewBox="0 0 14 14"><circle cx="7" cy="7" r="6" fill="#777"/><path d="M4 5h6l-3 5z" fill="#262626"/></svg></button></div>
      <svg class="knob" width="32" height="32"><circle cx="16" cy="16" r="16" fill="#242424"/><path d="M16.500 2v13" stroke="#c0c0c0"/></svg>
      <div class="rate">Rate:<br />1.0</div>`;
  }
}

/* ---------- taskbar ---------- */
@customElement("task-bar")
export class TaskBar extends LitElement {
  static styles = [sharedStyles, css`
    :host { display: flex; height: 40px; background: #212121; color: #f0f0f0; font: 12px/18px "Open Sans", "Noto Sans", sans-serif; flex: none; }
    .start { width: 48px; border: 0; background: none; display: grid; place-items: center; padding: 0; }
    .find { width: 288px; border: 1px solid #6a6a6a; background: #333; display: flex; align-items: center; gap: 11px; padding: 0 11px; }
    .find input { background: none; border: 0; padding: 0; font-size: 15px; width: 200px; color: #ddd; } .find input::placeholder { color: #dcdcdc; }
    .apps { display: flex; flex: 1; gap: 1px; padding-left: 3px; }
    .app { width: 48px; height: 40px; border: 0; background: none; padding: 6px 4px 0; display: flex; flex-direction: column; justify-content: space-between; align-items: center; }
    .app i { height: 2px; width: 40px; background: #aaa; } .app .none { background: none; } .act { background: #545454; } .act i { width: 48px; }
    .tray { display: grid; grid-template-columns: repeat(7, 24px) 30px; place-items: center; } .lang { margin-left: 14px; }
    .clock { text-align: center; width: 60px; margin-left: 9px; white-space: nowrap; display: flex; justify-content: center; font-size: 11px; padding-top: 2px; }
    .note { margin: 4px 12px 0 13px; } .edge { width: 4px; border-left: 1px solid #666; height: 40px; }
  `];
  render() {
    const icons = [
      svg`<defs><linearGradient id="eg"><stop stop-color="#1c9cde"/><stop offset="1" stop-color="#5be06a"/></linearGradient></defs><circle cx="12" cy="12" r="12" fill="#0c6fc4"/><path d="M0 10C1 3 7 0 12 0c7 0 12 5 12 10 0 4-3 6-6 6s-4-1-3.500-2C17 9 13 6 9 6 5 6 1 8 0 10z" fill="url(#eg)"/><path d="M9 10c-3 4 0 11 7 11 2 0 4-.5 5.500-1.500C19 22.500 16 24 12 24c-6-1-8-9-3-14z" fill="#14508f"/><path d="M12 9c-2 2-1 7 4 7-1-1-2-2-1-4 0-1-1-3-3-3z" fill="#212121"/>`,
      svg`<path d="M1 23l1.600-6A10.500 10.500 0 1 1 7 21.500z" fill="none" stroke="#25d366" stroke-width="2.200"/><path d="M8 6.500c1-.5 1.500 0 2.300 2.500l-1 1.500c1 2 2.500 3.300 4.500 4l1.500-1.500 2.700 1.500c0 2-2 3-3.500 2.800C10 16.500 6.500 12.500 6.500 9z" fill="#25d366"/>`,
      svg`<rect x=".5" y=".5" width="23" height="23" fill="#b50d10" stroke="#d33" stroke-dasharray="2 1"/><path d="M5 20L8 4h8l-.6 3h-5l-.6 3h4l-.5 3h-4L8 20zM12 11h8l-.5 2.500-5 4h4.300l-.5 2.500h-8l.5-2.500 5-4h-4z" fill="#fff"/>`,
      svg`<path d="M1 3h8l2 3h12v15H1z" fill="#f5b92e"/><path d="M1 8h22v13H1z" fill="#ffd866"/><path d="M5 23v-8h14v8h-4v-4H9v4z" fill="#3d9be0"/>`,
      svg`<circle cx="11" cy="11" r="10.500" fill="#2ba3df"/><path d="M4 11l13-5-2 11-4-3-2 2v-3l5-5-7 4z" fill="#fff"/><rect x="9" y="14" width="15" height="10" rx="2" fill="#e53935"/><text x="16.500" y="22.500" font-size="8" fill="#fff" text-anchor="middle">..28</text>`,
      svg`<path d="M3 20V11c1-4 4-6 7-6h12v15z" fill="#ffe600"/><path d="M2 11c1-6 5-8 9-8" fill="none" stroke="#ddd"/><rect x="5" y="9" width="16" height="8" rx="1" fill="#222"/><text x="13" y="16" font-size="7" font-weight="bold" fill="#ffe600" text-anchor="middle">PDF</text>`,
      svg`<circle cx="12" cy="12" r="11" fill="#2d2d2d" stroke="#666"/><path d="M7 9c4-4 10-2 10 3 0 5-3 8-6 10-3-3-5-9-4-13z" fill="#f47b20"/><path d="M9 10c2-1 3 0 3 2s-1 5-1.500 6C9 15 8 12 9 10z" fill="#ffc070"/><path d="M10 8c0-3 2-6 5-7 0 3 2 4 3 4-1 3-4 4-8 3z" fill="#57a639"/>`,
      null,
      svg`<path d="M7 1l15 2-4 20-16-1z" fill="#8fc3d4"/><path d="M7 1l15 2-1 4-15-2z" fill="#dcebf0"/><path d="M19 3l4 1-3 18-3 1z" fill="#d8d0b8"/><path d="M8 6l10 1-3 14-11-1z" fill="#5f9fb5"/><path d="M8 6l10 1-11 8-1 0z" fill="#a9d6e2"/>`,
      svg`<ellipse cx="12" cy="13" rx="12" ry="7" fill="#0a63d6" transform="rotate(-25 12 13)"/><path d="M1 13C5 6 14 2 22 5 17 9 8 10 1 13z" fill="#4aa5ff"/><ellipse cx="12" cy="15" rx="6" ry="2.200" fill="#dff0ff" transform="rotate(-25 12 15)"/>`,
      svg`<circle cx="12" cy="12" r="11.500" fill="#12508c"/><path d="M.8 14L7 16.500a3.500 3.500 0 0 1 2-1.500l3-4.500a4.300 4.300 0 1 1 4 3.700L12 17.500a3.300 3.300 0 0 1-6.200 1.500L1.500 17z" fill="#fff"/><circle cx="16" cy="9.500" r="2.800" fill="none" stroke="#12508c" stroke-width="1.200"/><circle cx="9" cy="17.800" r="2" fill="none" stroke="#12508c"/>`,
    ];
    const names = ["Edge", "WhatsApp", "FileZilla", "Explorer", "Telegram", "PDF", "FL Studio", "REAPER", "Notepad", "Browser", "Steam"];
    return html`
      <button class="start" aria-label="Start"><svg width="16" height="16" viewBox="0 0 16 16"><path d="M0 2.200L7 1.200V7.500H0zM7.800 1.100L16 0v7.500H7.800zM0 8.300h7v6.400l-7-1zM7.800 8.300H16V16l-8.200-1.200z" fill="#fff"/></svg></button>
      <label class="find"><svg width="17" height="17" viewBox="0 0 17 17"><circle cx="10.500" cy="6" r="5.200" fill="none" stroke="#eee" stroke-width="1.300"/><path d="M6.800 9.700L.8 16" stroke="#eee" stroke-width="1.300"/></svg><input placeholder="Поиск" aria-label="Поиск" /></label>
      <div class="apps">${icons.map((ic, i) => html`<button class="app ${i === 7 ? "act" : ""}" aria-label=${names[i]}>${ic ? html`<svg width="26" height="26" viewBox="-1 -1 26 26">${ic}</svg>` : reaperLogo(24)}<i class=${i === 5 || i === 6 ? "none" : ""}></i></button>`)}</div>
      <div class="tray">
        <svg width="14" height="8" viewBox="0 0 14 8"><path d="M1 7l6-6 6 6" fill="none" stroke="#fff" stroke-width="1.400"/></svg>
        <svg width="16" height="18" viewBox="0 0 16 18"><path d="M3.500 6V1.500h6V6M2 6h9v10H2zM5 3.500h1M7.500 3.500h1" fill="none" stroke="#eee" stroke-width="1.200"/><path d="M7 13l3 3 5-5" fill="none" stroke="#aaa" stroke-width="1.500"/></svg>
        <svg width="17" height="16" viewBox="0 0 17 16"><rect y="2" width="9" height="11" fill="#4a86d8" stroke="#cde"/><rect x="7" y="0" width="10" height="15" rx="4" fill="#18a53c"/><path d="M8 9h8v3c-1 3-7 3-8 0z" fill="#a9eab0"/><path d="M12 0v7" stroke="#fff"/></svg>
        <svg width="14" height="12" viewBox="0 0 14 12"><ellipse cx="7" cy="6" rx="6" ry="6" fill="#333"/><path d="M1.500 3.500h4M1 6h4M.5 8.500h4M9 3.500H6.500V6H9v2.500H6M13.500 3.500h-3M11.500 8.500V6h2" fill="none" stroke="#e0703a" stroke-width="1.200"/></svg>
        <svg width="16" height="14" viewBox="0 0 16 14"><path d="M1 13C2 5 5 1 15 1c1 6-4 12-14 12z" fill="#fff"/><path d="M4 8c2-3 5-4 8-3-2 3-5 5-8 3z" fill="#222"/></svg>
        <svg width="16" height="16" viewBox="0 0 16 16"><path d="M1 14C1 7 6 2 13 2M4.500 14.500C4.500 9 8 5.500 13.500 5.500M8 15c0-4 2-6 6-6" fill="none" stroke="#ccc" stroke-width="1.400"/><circle cx="12.500" cy="13.500" r="2" fill="#fff"/></svg>
        <svg width="18" height="14" viewBox="0 0 18 14"><path d="M1 5h2.500L7 1.500v11L3.500 9H1z" fill="none" stroke="#fff" stroke-width="1.200"/><path d="M9 5q1.500 2 0 4M11.500 3q3 4 0 8M14 1.500q4.500 5.500 0 11" fill="none" stroke="#bbb"/></svg>
        <span class="lang">РУС</span>
      </div>
      <div class="clock"><span>20:49<br />07.04.2025</span></div>
      <svg class="note" width="26" height="32" viewBox="0 0 26 32"><path d="M1 8h16v13h-7l-3 4v-4H1z" fill="#fff"/><path d="M4 11.500h10M4 14.500h10M4 17.500h7" stroke="#222"/><circle cx="17" cy="23" r="8" fill="#3a3a3a" stroke="#888"/><text x="17" y="27.500" font-size="12" font-weight="bold" fill="#fff" text-anchor="middle">2</text></svg>
      <span class="edge"></span>`;
  }
}

@customElement("app-root")
export class AppRoot extends LitElement {
  static styles = [sharedStyles, css`
    :host { display: flex; flex-direction: column; height: 100vh; position: relative; overflow: hidden; background: #333; font: 12px/16px Roboto, "Open Sans", "Noto Sans", sans-serif; }
    .title { display: flex; align-items: center; height: 23px; background: #fff; color: #8e8e8e; padding: 0 20px 0 2px; gap: 5px; flex: none; }
    .title h1 { font: inherit; margin: 0; flex: 1; white-space: nowrap; }
    .win { display: flex; gap: 35px; } .win button { border: 0; background: none; padding: 0; width: 11px; }
    nav { display: flex; height: 20px; align-items: center; background: #fff; color: #666; gap: 14px; padding: 2px 7px 0; border-bottom: 2px solid #eee; flex: none; }
    nav a { color: inherit; text-decoration: none; } nav .audio { margin-left: auto; white-space: nowrap; font-size: 11px; }
    main { display: flex; flex: 1; min-height: 0; }
    .work { display: flex; flex-direction: column; flex: 1; min-width: 0; }
    .panes { display: flex; flex: 1; min-height: 0; }
    transport-bar { margin-top: -39px; flex: none; position: relative; }
    .d1, .d2 { position: absolute; z-index: 1; }
    .d1 { left: 372px; top: 21px; width: 632px; z-index: 2; } .d2 { left: 772px; top: 307px; width: 506px; }
    .tip { position: absolute; z-index: 3; left: 104px; top: 435px; border: 1px solid #767676; background: #fff; color: #575757; padding: 0 5px; line-height: 18px; box-shadow: 3px 3px 2px rgba(0, 0, 0, 0.5); white-space: nowrap; }
  `];
  render() {
    return html`
      <header class="title">${reaperLogo(16)}<h1>Готовим треки [modified] - REAPER v7.35 - EVALUATION LICENSE</h1>
        <div class="win"><button aria-label="Minimize"><svg width="11" height="11"><path d="M0 5.500h11" stroke="#777"/></svg></button><button aria-label="Restore"><svg width="11" height="11"><path d="M.5 3.500h7v7h-7zM3.500 3V.5h7v7H8" fill="none" stroke="#777"/></svg></button><button aria-label="Close">${closeX("#777")}</button></div></header>
      <nav>${["File", "Edit", "View", "Insert", "Item", "Track", "Options", "Actions", "Extensions"].map((m) => html`<a href="#">${m}</a>`)}<span class="audio">[44.1kHz 24bit WAV : 2/2ch 2048spls ~88/100ms ASIO]</span></nav>
      <main><master-strip></master-strip>
        <div class="work"><div class="panes"><track-panel></track-panel><arrange-view></arrange-view></div><transport-bar></transport-bar></div></main>
      <task-bar></task-bar>
      <render-dialog class="d2"></render-dialog>
      <finished-dialog class="d1"></finished-dialog>
      <div class="tip" role="tooltip">Sends/Hardware Outputs</div>`;
  }
}
